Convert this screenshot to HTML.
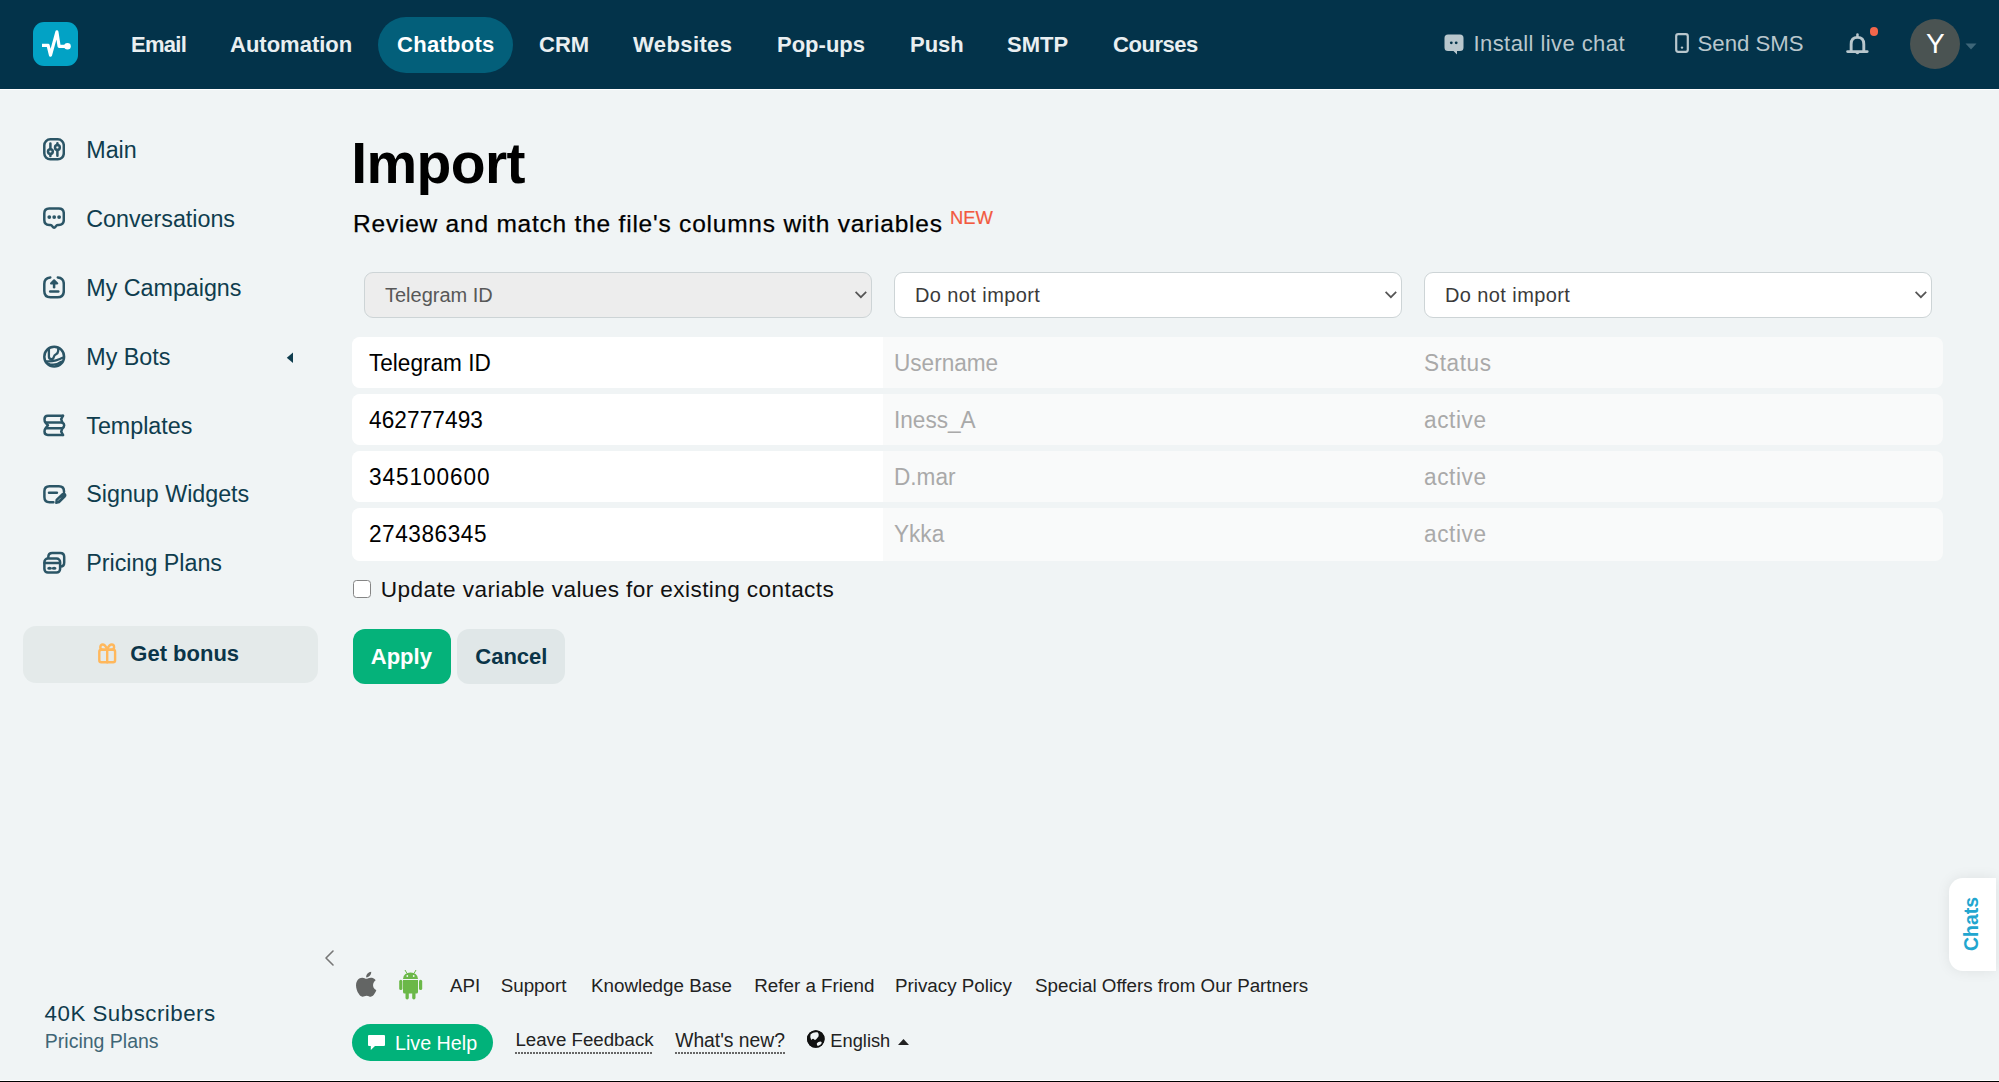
<!DOCTYPE html>
<html><head><meta charset="utf-8"><style>
html,body{margin:0;padding:0;width:1999px;height:1082px;overflow:hidden;background:#f0f4f5;font-family:"Liberation Sans",sans-serif;}
.t{position:absolute;white-space:nowrap;}
</style></head><body>
<div style="position:absolute;left:0px;top:0px;width:1999px;height:89px;background:#03334a"></div>
<div style="position:absolute;left:0px;top:89px;width:1999px;height:1px;background:#ffffff"></div>
<div style="position:absolute;left:33px;top:22px;width:45px;height:44px;background:#02a2c5;border-radius:11px"></div>
<svg style="position:absolute;left:33px;top:22px" width="45" height="44" viewBox="0 0 45 44"><path d="M9 23.4 H15.1 L17.5 33.2 L23.9 9.9 L26.1 24.3 H33" fill="none" stroke="#fff" stroke-width="3.2" stroke-linejoin="round" stroke-linecap="butt"/><circle cx="34.5" cy="24.2" r="3.3" fill="#fff"/></svg>
<div style="position:absolute;left:378px;top:17px;width:135px;height:56px;background:#035f7a;border-radius:28px"></div>
<div class="t" style="left:131px;top:33.68px;font-size:22px;line-height:22px;color:#e9eff1;font-weight:700;letter-spacing:-0.7px;">Email</div>
<div class="t" style="left:230px;top:33.68px;font-size:22px;line-height:22px;color:#e9eff1;font-weight:700;letter-spacing:0px;">Automation</div>
<div class="t" style="left:397px;top:33.68px;font-size:22px;line-height:22px;color:#ffffff;font-weight:700;letter-spacing:0.28px;">Chatbots</div>
<div class="t" style="left:539px;top:33.68px;font-size:22px;line-height:22px;color:#e9eff1;font-weight:700;letter-spacing:0px;">CRM</div>
<div class="t" style="left:633px;top:33.68px;font-size:22px;line-height:22px;color:#e9eff1;font-weight:700;letter-spacing:0.4px;">Websites</div>
<div class="t" style="left:777px;top:33.68px;font-size:22px;line-height:22px;color:#e9eff1;font-weight:700;letter-spacing:0px;">Pop-ups</div>
<div class="t" style="left:910px;top:33.68px;font-size:22px;line-height:22px;color:#e9eff1;font-weight:700;letter-spacing:0px;">Push</div>
<div class="t" style="left:1007px;top:33.68px;font-size:22px;line-height:22px;color:#e9eff1;font-weight:700;letter-spacing:0px;">SMTP</div>
<div class="t" style="left:1113px;top:33.68px;font-size:22px;line-height:22px;color:#e9eff1;font-weight:700;letter-spacing:-0.45px;">Courses</div>
<svg style="position:absolute;left:1444px;top:34px" width="20" height="21" viewBox="0 0 20 21"><path d="M4 0.5 H16 Q19.5 0.5 19.5 4 V13.5 Q19.5 17 16 17 H13 V20.5 L9.5 17 H4 Q0.5 17 0.5 13.5 V4 Q0.5 0.5 4 0.5 Z" fill="#b9c7cd"/><circle cx="7.3" cy="8.8" r="1.4" fill="#03334a"/><circle cx="12.2" cy="8.8" r="1.4" fill="#03334a"/></svg>
<div class="t" style="left:1473.5px;top:33.38px;font-size:22px;line-height:22px;color:#b9c7cd;font-weight:400;letter-spacing:0.42px;">Install live chat</div>
<svg style="position:absolute;left:1675px;top:33px" width="14" height="20" viewBox="0 0 14 20"><rect x="1.2" y="1.2" width="11.6" height="17.6" rx="2" fill="none" stroke="#b9c7cd" stroke-width="2.2"/><circle cx="7" cy="14.6" r="1.2" fill="#b9c7cd"/></svg>
<div class="t" style="left:1697.5px;top:32.51px;font-size:22.2px;line-height:22.2px;color:#b9c7cd;font-weight:400;letter-spacing:0px;">Send SMS</div>
<svg style="position:absolute;left:1845px;top:32px" width="24" height="24" viewBox="0 0 24 24"><path d="M6.15 19.6 V12.2 Q6.15 5.4 12.45 5.4 Q18.8 5.4 18.8 12.2 V19.6 M2.6 19.6 H22.2" fill="none" stroke="#b9c7cd" stroke-width="2.9" stroke-linecap="round"/><rect x="11.2" y="1.2" width="2.5" height="4.5" rx="1.25" fill="#b9c7cd"/><path d="M10 20.5 Q12.45 24 14.9 20.5 Z" fill="#b9c7cd"/></svg>
<div style="position:absolute;left:1869.8px;top:27.3px;width:8.6px;height:8.6px;background:#f3664b;border-radius:50%"></div>
<div style="position:absolute;left:1910px;top:19px;width:50px;height:50px;background:#4a5352;border-radius:50%"></div>
<div class="t" style="left:1926px;top:30.00px;font-size:28px;line-height:28px;color:#ffffff;font-weight:400;letter-spacing:0px;">Y</div>
<svg style="position:absolute;left:1965px;top:43px" width="12" height="7" viewBox="0 0 12 7"><path d="M0.5 0.5 H11.5 L6 6.5 Z" fill="#3e6678"/></svg>
<div class="t" style="left:86.3px;top:139.28px;font-size:23.3px;line-height:23.3px;color:#0f3d4e;font-weight:400;letter-spacing:-0.02px;">Main</div>
<div class="t" style="left:86.3px;top:208.28px;font-size:23.3px;line-height:23.3px;color:#0f3d4e;font-weight:400;letter-spacing:-0.02px;">Conversations</div>
<div class="t" style="left:86.3px;top:276.78px;font-size:23.3px;line-height:23.3px;color:#0f3d4e;font-weight:400;letter-spacing:-0.02px;">My Campaigns</div>
<div class="t" style="left:86.3px;top:345.78px;font-size:23.3px;line-height:23.3px;color:#0f3d4e;font-weight:400;letter-spacing:-0.02px;">My Bots</div>
<div class="t" style="left:86.3px;top:414.58px;font-size:23.3px;line-height:23.3px;color:#0f3d4e;font-weight:400;letter-spacing:-0.02px;">Templates</div>
<div class="t" style="left:86.3px;top:483.28px;font-size:23.3px;line-height:23.3px;color:#0f3d4e;font-weight:400;letter-spacing:-0.02px;">Signup Widgets</div>
<div class="t" style="left:86.3px;top:552.28px;font-size:23.3px;line-height:23.3px;color:#0f3d4e;font-weight:400;letter-spacing:-0.02px;">Pricing Plans</div>
<svg style="position:absolute;left:43px;top:138px" width="22" height="23" viewBox="0 0 22 23"><rect x="1.3" y="1.3" width="19.5" height="20" rx="6" fill="none" stroke="#2b5566" stroke-width="2.5" stroke-linecap="round" stroke-linejoin="round"/><path d="M7.4 5.5 V11 M7.4 16 V18 M14.4 5.2 V7 M14.4 12 V17.8" fill="none" stroke="#2b5566" stroke-width="2.5" stroke-linecap="round" stroke-linejoin="round"/><circle cx="7.4" cy="13.6" r="2.4" fill="none" stroke="#2b5566" stroke-width="2.5" stroke-linecap="round" stroke-linejoin="round"/><circle cx="14.4" cy="9.5" r="2.4" fill="none" stroke="#2b5566" stroke-width="2.5" stroke-linecap="round" stroke-linejoin="round"/></svg>
<svg style="position:absolute;left:43px;top:207px" width="22" height="24" viewBox="0 0 22 24"><path d="M6.2 1.5 H15.8 Q20.8 1.5 20.8 6.5 V13 Q20.8 17.9 15.8 17.9 H14.8 Q13.6 17.9 12.7 19.5 Q11.1 21.8 9.5 19.5 Q8.6 17.9 7.4 17.9 H6.2 Q1.3 17.9 1.3 13 V6.5 Q1.3 1.5 6.2 1.5 Z" fill="none" stroke="#2b5566" stroke-width="2.5" stroke-linecap="round" stroke-linejoin="round"/><circle cx="6.3" cy="10.1" r="1.9" fill="#2b5566"/><circle cx="11.2" cy="10.1" r="1.9" fill="#2b5566"/><circle cx="16.1" cy="10.1" r="1.9" fill="#2b5566"/></svg>
<svg style="position:absolute;left:43px;top:276px" width="22" height="23" viewBox="0 0 22 23"><path d="M7.3 1.5 Q1.3 2 1.3 8 V15 Q1.3 21.3 7.5 21.3 H14.5 Q20.8 21.3 20.8 15 V8 Q20.8 2 14.8 1.5" fill="none" stroke="#2b5566" stroke-width="2.5" stroke-linecap="round" stroke-linejoin="round"/><path d="M11.1 11.3 V6.5" fill="none" stroke="#2b5566" stroke-width="2.5" stroke-linecap="round" stroke-linejoin="round"/><path d="M8 7.4 L11.1 4.2 L14.3 7.4 Z" fill="#2b5566" stroke="#2b5566" stroke-width="2" stroke-linejoin="round"/><path d="M7.2 15.4 H15.3" fill="none" stroke="#2b5566" stroke-width="2.5" stroke-linecap="round" stroke-linejoin="round"/></svg>
<svg style="position:absolute;left:43px;top:345px" width="23" height="24" viewBox="0 0 23 24"><circle cx="11.2" cy="11.7" r="9.9" fill="none" stroke="#2b5566" stroke-width="2.5" stroke-linecap="round" stroke-linejoin="round"/><path d="M5.9 4 V11.6 Q5.9 14.2 8.3 14.2 Q10.2 14.2 10.7 12.2 Q11.2 10.2 13 9.3 Q15 8.2 15.2 5.8 V3.8" fill="none" stroke="#2b5566" stroke-width="2.3" stroke-linecap="round" stroke-linejoin="round"/><path d="M3.6 16.3 Q12 16.9 20.6 12.3" fill="none" stroke="#2b5566" stroke-width="2.3" stroke-linecap="round"/><path d="M4.6 18.3 Q12 21.6 18.3 16.6" fill="none" stroke="#2b5566" stroke-width="2" stroke-linecap="round"/></svg>
<svg style="position:absolute;left:43px;top:413px" width="23" height="24" viewBox="0 0 23 24"><path d="M20 2.75 H4.8 Q1.5 2.75 1.5 6.2 Q1.5 8.5 2.5 9.6 L5 12.3 L2.5 15.3 Q1.5 16.3 1.5 18.6 Q1.5 22 4.8 22 H20" fill="none" stroke="#2b5566" stroke-width="2.5" stroke-linecap="round" stroke-linejoin="round"/><path d="M20 2.75 L18.2 6.2 L19.3 9.6 Q21.2 10.5 21.2 12.3 Q21.2 14.2 19.3 15.3 L18.2 18.6 L20 22" fill="none" stroke="#2b5566" stroke-width="2.5" stroke-linecap="round" stroke-linejoin="round"/><path d="M3 9.6 H19.3 M3 15.3 H19.3" fill="none" stroke="#2b5566" stroke-width="2.5" stroke-linecap="round" stroke-linejoin="round"/></svg>
<svg style="position:absolute;left:43px;top:482px" width="24" height="23" viewBox="0 0 24 23"><path d="M10.4 20.2 H6.5 Q1.4 20.2 1.4 15 V9.3 Q1.4 4.2 6.5 4.2 H15.9 Q21 4.2 21 9.3 V10" fill="none" stroke="#2b5566" stroke-width="2.5" stroke-linecap="round" stroke-linejoin="round"/><path d="M6 10.7 H13.9" fill="none" stroke="#2b5566" stroke-width="2.5" stroke-linecap="round" stroke-linejoin="round"/><path d="M13 21 L13.4 17.6 L19.4 11.9 Q20.7 10.8 21.9 12 Q23.1 13.2 22 14.5 L16.2 20.4 Z" fill="#2b5566" stroke="#2b5566" stroke-width="1.8" stroke-linejoin="round"/><path d="M15 18.6 L17.6 16" stroke="#8aa3ad" stroke-width="1" stroke-linecap="round"/></svg>
<svg style="position:absolute;left:43px;top:551px" width="23" height="23" viewBox="0 0 23 23"><path d="M5.3 6.5 V5.9 Q5.3 1.9 9.3 1.9 H17.2 Q21.2 1.9 21.2 5.9 V11.5 Q21.2 15.5 17.6 15.5" fill="none" stroke="#2b5566" stroke-width="2.5" stroke-linecap="round" stroke-linejoin="round"/><rect x="1.4" y="7.5" width="15.7" height="14.1" rx="3.5" fill="none" stroke="#2b5566" stroke-width="2.5" stroke-linecap="round" stroke-linejoin="round"/><path d="M1.6 12 H16.9" fill="none" stroke="#2b5566" stroke-width="2.5" stroke-linecap="round" stroke-linejoin="round"/><ellipse cx="6.6" cy="17.3" rx="2.4" ry="1.5" fill="#2b5566"/><ellipse cx="11.1" cy="17.3" rx="2.4" ry="1.5" fill="#2b5566"/></svg>
<svg style="position:absolute;left:286px;top:352px" width="8" height="12" viewBox="0 0 8 12"><path d="M7 0.5 V11 L0.8 5.75 Z" fill="#0f3d4e"/></svg>
<div style="position:absolute;left:22.5px;top:626px;width:295px;height:57px;background:#e4eaea;border-radius:13px"></div>
<svg style="position:absolute;left:96px;top:642px" width="22" height="22" viewBox="0 0 22 22"><rect x="3.3" y="7.8" width="15.8" height="12.5" rx="2" fill="none" stroke="#ffb85c" stroke-width="2.4" stroke-linejoin="round" stroke-linecap="round"/><path d="M11.2 7.8 V20.3 M11.2 7 Q9 2.5 6.7 2.5 Q4.3 2.5 4.3 5.2 Q4.3 7.8 7.5 7.8 H14.9 Q18.1 7.8 18.1 5.2 Q18.1 2.5 15.7 2.5 Q13.4 2.5 11.2 7" fill="none" stroke="#ffb85c" stroke-width="2.4" stroke-linejoin="round" stroke-linecap="round"/></svg>
<div class="t" style="left:130.3px;top:643.08px;font-size:22px;line-height:22px;color:#0b3548;font-weight:700;letter-spacing:0px;">Get bonus</div>
<div class="t" style="left:351.2px;top:134.55px;font-size:57px;line-height:57px;color:#000000;font-weight:700;letter-spacing:-0.6px;">Import</div>
<div class="t" style="left:353px;top:212.26px;font-size:24.5px;line-height:24.5px;color:#000000;font-weight:400;letter-spacing:0.78px;-webkit-text-stroke:0.25px #000">Review and match the file's columns with variables</div>
<div class="t" style="left:950px;top:209.12px;font-size:18.4px;line-height:18.4px;color:#f25a3f;font-weight:400;letter-spacing:0px;-webkit-text-stroke:0.2px #f25a3f">NEW</div>
<div style="position:absolute;left:364px;top:272px;width:508px;height:46px;background:#ededed;border:1.6px solid #cdd4d6;border-radius:9px;box-sizing:border-box"></div>
<div class="t" style="left:385px;top:284.87px;font-size:20px;line-height:20px;color:#585858;font-weight:400;letter-spacing:0px;">Telegram ID</div>
<svg style="position:absolute;left:854px;top:290px" width="14" height="10" viewBox="0 0 14 10"><path d="M1.6 1.8 L6.9 7.2 L12.2 1.8" fill="none" stroke="#555" stroke-width="1.7" stroke-linecap="butt" stroke-linejoin="miter"/></svg>
<div style="position:absolute;left:894px;top:272px;width:508px;height:46px;background:#ffffff;border:1.6px solid #cdd4d6;border-radius:9px;box-sizing:border-box"></div>
<div class="t" style="left:915px;top:284.87px;font-size:20px;line-height:20px;color:#3a3a3a;font-weight:400;letter-spacing:0.4px;">Do not import</div>
<svg style="position:absolute;left:1384px;top:290px" width="14" height="10" viewBox="0 0 14 10"><path d="M1.6 1.8 L6.9 7.2 L12.2 1.8" fill="none" stroke="#555" stroke-width="1.7" stroke-linecap="butt" stroke-linejoin="miter"/></svg>
<div style="position:absolute;left:1424px;top:272px;width:508px;height:46px;background:#ffffff;border:1.6px solid #cdd4d6;border-radius:9px;box-sizing:border-box"></div>
<div class="t" style="left:1445px;top:284.87px;font-size:20px;line-height:20px;color:#3a3a3a;font-weight:400;letter-spacing:0.4px;">Do not import</div>
<svg style="position:absolute;left:1914px;top:290px" width="14" height="10" viewBox="0 0 14 10"><path d="M1.6 1.8 L6.9 7.2 L12.2 1.8" fill="none" stroke="#555" stroke-width="1.7" stroke-linecap="butt" stroke-linejoin="miter"/></svg>
<div style="position:absolute;left:352px;top:337px;width:1591px;height:51.2px;background:#f9fafa;border-radius:8px"></div>
<div style="position:absolute;left:352px;top:337px;width:531px;height:51.2px;background:#ffffff;border-radius:8px 0 0 8px"></div>
<div class="t" style="left:369px;top:351.23px;font-size:24.295px;line-height:24.295px;color:#000000;font-weight:400;letter-spacing:0.0px;transform:scaleX(0.9302);transform-origin:0 0">Telegram ID</div>
<div class="t" style="left:894px;top:351.23px;font-size:24.295px;line-height:24.295px;color:#a9a9a9;font-weight:400;letter-spacing:0px;transform:scaleX(0.9302);transform-origin:0 0">Username</div>
<div class="t" style="left:1423.8px;top:351.23px;font-size:24.295px;line-height:24.295px;color:#a9a9a9;font-weight:400;letter-spacing:0.6449999999999999px;transform:scaleX(0.9302);transform-origin:0 0">Status</div>
<div style="position:absolute;left:352px;top:393.8px;width:1591px;height:51.2px;background:#f9fafa;border-radius:8px"></div>
<div style="position:absolute;left:352px;top:393.8px;width:531px;height:51.2px;background:#ffffff;border-radius:8px 0 0 8px"></div>
<div class="t" style="left:369px;top:408.03px;font-size:24.295px;line-height:24.295px;color:#000000;font-weight:400;letter-spacing:0.1075px;transform:scaleX(0.9302);transform-origin:0 0">462777493</div>
<div class="t" style="left:894px;top:408.03px;font-size:24.295px;line-height:24.295px;color:#a9a9a9;font-weight:400;letter-spacing:0px;transform:scaleX(0.9302);transform-origin:0 0">Iness_A</div>
<div class="t" style="left:1423.8px;top:408.03px;font-size:24.295px;line-height:24.295px;color:#a9a9a9;font-weight:400;letter-spacing:0.6449999999999999px;transform:scaleX(0.9302);transform-origin:0 0">active</div>
<div style="position:absolute;left:352px;top:450.6px;width:1591px;height:51.3px;background:#f9fafa;border-radius:8px"></div>
<div style="position:absolute;left:352px;top:450.6px;width:531px;height:51.3px;background:#ffffff;border-radius:8px 0 0 8px"></div>
<div class="t" style="left:369px;top:464.83px;font-size:24.295px;line-height:24.295px;color:#000000;font-weight:400;letter-spacing:1.02125px;transform:scaleX(0.9302);transform-origin:0 0">345100600</div>
<div class="t" style="left:894px;top:464.83px;font-size:24.295px;line-height:24.295px;color:#a9a9a9;font-weight:400;letter-spacing:0px;transform:scaleX(0.9302);transform-origin:0 0">D.mar</div>
<div class="t" style="left:1423.8px;top:464.83px;font-size:24.295px;line-height:24.295px;color:#a9a9a9;font-weight:400;letter-spacing:0.6449999999999999px;transform:scaleX(0.9302);transform-origin:0 0">active</div>
<div style="position:absolute;left:352px;top:507.5px;width:1591px;height:53px;background:#f9fafa;border-radius:8px"></div>
<div style="position:absolute;left:352px;top:507.5px;width:531px;height:53px;background:#ffffff;border-radius:8px 0 0 8px"></div>
<div class="t" style="left:369px;top:521.73px;font-size:24.295px;line-height:24.295px;color:#000000;font-weight:400;letter-spacing:0.59125px;transform:scaleX(0.9302);transform-origin:0 0">274386345</div>
<div class="t" style="left:894px;top:521.73px;font-size:24.295px;line-height:24.295px;color:#a9a9a9;font-weight:400;letter-spacing:0px;transform:scaleX(0.9302);transform-origin:0 0">Ykka</div>
<div class="t" style="left:1423.8px;top:521.73px;font-size:24.295px;line-height:24.295px;color:#a9a9a9;font-weight:400;letter-spacing:0.6449999999999999px;transform:scaleX(0.9302);transform-origin:0 0">active</div>
<div style="position:absolute;left:352.5px;top:580px;width:18.3px;height:18px;background:#fff;border:1.6px solid #858585;border-radius:3.5px;box-sizing:border-box"></div>
<div class="t" style="left:380.8px;top:579.37px;font-size:22.6px;line-height:22.6px;color:#111111;font-weight:400;letter-spacing:0.4px;">Update variable values for existing contacts</div>
<div style="position:absolute;left:353px;top:629px;width:98px;height:55px;background:#05b27a;border-radius:12px"></div>
<div class="t" style="left:370.8px;top:645.58px;font-size:22px;line-height:22px;color:#ffffff;font-weight:700;letter-spacing:0px;">Apply</div>
<div style="position:absolute;left:457px;top:629px;width:108px;height:55px;background:#e0e7e8;border-radius:12px"></div>
<div class="t" style="left:475.3px;top:645.58px;font-size:22px;line-height:22px;color:#0b3548;font-weight:700;letter-spacing:0px;">Cancel</div>
<svg style="position:absolute;left:322px;top:949px" width="14" height="18" viewBox="0 0 14 18"><path d="M11 2 L4 9 L11 16" fill="none" stroke="#777" stroke-width="1.6" stroke-linecap="round" stroke-linejoin="round"/></svg>
<svg style="position:absolute;left:355px;top:970px" width="24" height="28" viewBox="0 0 24 28"><path transform="translate(1.2,0.3) scale(1.04)" fill="#636564" d="M16.2 14.1c0-3 2.5-4.5 2.6-4.6-1.4-2.1-3.6-2.4-4.4-2.4-1.9-.2-3.7 1.1-4.6 1.1-1 0-2.4-1.1-4-1-2 0-3.9 1.2-5 3-2.1 3.7-.5 9.2 1.5 12.2 1 1.5 2.2 3.1 3.8 3 1.5-.1 2.1-1 4-1 1.8 0 2.3 1 3.9 1 1.6 0 2.7-1.5 3.7-3 1.2-1.700 1.600-3.300 1.700-3.400-.1 0-3.200-1.200-3.200-4.900zM13.2 5.100c.8-1 1.400-2.400 1.200-3.800-1.200.1-2.700.8-3.500 1.800-.8.900-1.500 2.300-1.300 3.700 1.400.100 2.700-.7 3.600-1.700z"/></svg>
<svg style="position:absolute;left:397px;top:969px" width="27" height="31" viewBox="0 0 27 31"><g fill="#6bb848"><path d="M6 11 H21 V23 Q21 24.5 19.5 24.5 H7.5 Q6 24.5 6 23 Z"/><path d="M6 10 Q6.5 3.5 13.5 3.5 Q20.5 3.5 21 10 Z"/><rect x="2.2" y="10.8" width="3.2" height="10.3" rx="1.6"/><rect x="22" y="10.8" width="3.2" height="10.3" rx="1.6"/><rect x="8.5" y="22" width="3.3" height="8.5" rx="1.65"/><rect x="15.2" y="22" width="3.3" height="8.5" rx="1.65"/><path d="M8 1 L10 4.5 M19 1 L17 4.5" stroke="#6bb848" stroke-width="1"/></g><circle cx="10.3" cy="7" r="0.9" fill="#f0f4f5"/><circle cx="16.7" cy="7" r="0.9" fill="#f0f4f5"/></svg>
<div class="t" style="left:450px;top:977.09px;font-size:18.8px;line-height:18.8px;color:#222222;font-weight:400;letter-spacing:0px;">API</div>
<div class="t" style="left:500.7px;top:977.09px;font-size:18.8px;line-height:18.8px;color:#222222;font-weight:400;letter-spacing:0px;">Support</div>
<div class="t" style="left:591px;top:977.09px;font-size:18.8px;line-height:18.8px;color:#222222;font-weight:400;letter-spacing:0px;">Knowledge Base</div>
<div class="t" style="left:754.3px;top:977.09px;font-size:18.8px;line-height:18.8px;color:#222222;font-weight:400;letter-spacing:0px;">Refer a Friend</div>
<div class="t" style="left:895px;top:977.09px;font-size:18.8px;line-height:18.8px;color:#222222;font-weight:400;letter-spacing:0px;">Privacy Policy</div>
<div class="t" style="left:1035px;top:977.09px;font-size:18.8px;line-height:18.8px;color:#222222;font-weight:400;letter-spacing:0px;">Special Offers from Our Partners</div>
<div class="t" style="left:44.6px;top:1002.62px;font-size:22.3px;line-height:22.3px;color:#0f3b4d;font-weight:400;letter-spacing:0.5px;">40K Subscribers</div>
<div class="t" style="left:44.8px;top:1031.79px;font-size:19.5px;line-height:19.5px;color:#3f6676;font-weight:400;letter-spacing:0px;">Pricing Plans</div>
<div style="position:absolute;left:352px;top:1024px;width:141px;height:37px;background:#01b27a;border-radius:18.5px"></div>
<svg style="position:absolute;left:367px;top:1034px" width="19" height="17" viewBox="0 0 19 17"><path d="M2 1 H17 Q18 1 18 2 V11 Q18 12 17 12 H8 L3.8 16 V12 H2 Q1 12 1 11 V2 Q1 1 2 1 Z" fill="#fff"/></svg>
<div class="t" style="left:395px;top:1033.52px;font-size:19.7px;line-height:19.7px;color:#ffffff;font-weight:400;letter-spacing:0px;">Live Help</div>
<div class="t" style="left:515.4px;top:1031.47px;font-size:18.7px;line-height:18.7px;color:#222222;font-weight:400;letter-spacing:0px;">Leave Feedback</div>
<div style="position:absolute;left:515px;top:1052px;width:138px;height:1.6px;background:repeating-linear-gradient(90deg,#666 0 1.6px,transparent 1.6px 3px)"></div>
<div class="t" style="left:675.2px;top:1030.96px;font-size:19.3px;line-height:19.3px;color:#222222;font-weight:400;letter-spacing:0px;">What's new?</div>
<div style="position:absolute;left:675px;top:1052px;width:110px;height:1.6px;background:repeating-linear-gradient(90deg,#666 0 1.6px,transparent 1.6px 3px)"></div>
<svg style="position:absolute;left:806px;top:1030px" width="19" height="19" viewBox="0 0 19 19"><circle cx="9.8" cy="9" r="8.8" fill="#111"/><path d="M4.6 4.2 Q7.5 1.6 11.6 2.3 Q13.2 3.6 12.6 6.2 Q11.6 7.6 10.2 9.3 Q8.8 10.6 8 9.3 Q7.2 7.9 5.2 9.9 Q3.6 7.3 4.6 4.2 Z" fill="#f0f4f5"/><ellipse cx="13.3" cy="13.7" rx="2.7" ry="1.8" transform="rotate(-28 13.3 13.7)" fill="#f0f4f5"/><circle cx="9.8" cy="9" r="8.1" fill="none" stroke="#111" stroke-width="1.4"/></svg>
<div class="t" style="left:830.3px;top:1031.81px;font-size:18.3px;line-height:18.3px;color:#222222;font-weight:400;letter-spacing:0px;">English</div>
<svg style="position:absolute;left:897px;top:1038px" width="13" height="8" viewBox="0 0 13 8"><path d="M1 7 L6.5 1 L12 7 Z" fill="#222"/></svg>
<div style="position:absolute;left:1949px;top:878px;width:47px;height:93px;background:#fff;border-radius:14px 0 0 14px;box-shadow:0 0 14px rgba(0,0,0,0.08)"></div>
<div class="t" style="left:1947.5px;top:877px;width:47px;height:93px;display:flex;align-items:center;justify-content:center"><div style="transform:rotate(-90deg);font-size:19.5px;font-weight:700;color:#22a6cf;white-space:nowrap;line-height:20px">Chats</div></div>
<div style="position:absolute;left:0px;top:1080px;width:1999px;height:1px;background:#fff"></div>
<div style="position:absolute;left:0px;top:1081px;width:1999px;height:1px;background:#000"></div>
</body></html>
